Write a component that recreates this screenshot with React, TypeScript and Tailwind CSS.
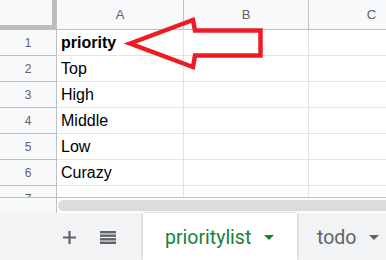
const rows = ['priority', 'Top', 'High', 'Middle', 'Low', 'Curazy', '']

function Caret({ color }: { color: string }) {
  return (
    <svg width="10" height="5" viewBox="0 0 10 5" className="shrink-0">
      <path d="M0 0 L10 0 L5 5 Z" fill={color} />
    </svg>
  )
}

export default function App() {
  return (
    <div className="relative w-[386px] h-[260px] overflow-hidden bg-white font-['Liberation_Sans',Arial,sans-serif]">
      {/* grid */}
      <div className="h-[197px] overflow-hidden">
        <div className="flex h-[30px] bg-[#f8f9fa] border-b border-[#c0c0c0] text-[13px] text-[#5f6368]">
          <div className="w-[57px] shrink-0 border-r border-[#c0c0c0]">
            <div className="w-[56px] h-[29px] border-r-4 border-b-4 border-[#bdbdbd]" />
          </div>
          <div className="w-[127px] shrink-0 flex items-center justify-center border-r border-[#c0c0c0]">A</div>
          <div className="w-[125px] shrink-0 flex items-center justify-center border-r border-[#c0c0c0]">B</div>
          <div className="w-[125px] shrink-0 flex items-center justify-center">C</div>
        </div>
        {rows.map((v, i) => (
          <div key={i} className="flex h-[26px]">
            <div className="w-[57px] shrink-0 flex items-center justify-center bg-[#f8f9fa] border-r border-b border-[#c0c0c0] text-[12px] text-[#5f6368]">
              {i + 1}
            </div>
            <div
              className={`w-[127px] shrink-0 flex items-center pl-1 border-r border-b border-[#e2e3e3] text-[16px] text-black ${
                i === 0 ? 'font-bold' : ''
              }`}
            >
              {v}
            </div>
            <div className="w-[125px] shrink-0 border-r border-b border-[#e2e3e3]" />
            <div className="w-[125px] shrink-0 border-b border-[#e2e3e3]" />
          </div>
        ))}
      </div>

      {/* horizontal scrollbar */}
      <div className="flex h-[16px] border-t border-[#c0c0c0]">
        <div className="w-[57px] shrink-0 bg-[#f8f9fa] border-r border-[#c0c0c0]" />
        <div className="flex-1 pt-[2px] pl-[1px]">
          <div className="h-[11px] rounded-l-full bg-[#dadce0]" />
        </div>
      </div>

      {/* sheet tabs */}
      <div className="flex h-[47px] bg-[#f1f3f4] font-['Roboto',Arial,sans-serif] text-[19.5px]">
        <div className="w-[143px] shrink-0 flex items-center pl-[63px] pt-[2px]">
          <svg width="13" height="13" viewBox="0 0 13 13">
            <path d="M6.5 0 V13 M0 6.5 H13" stroke="#5f6368" strokeWidth="2.2" />
          </svg>
          <svg width="16" height="13" viewBox="0 0 16 13" className="ml-[24px]">
            <g fill="#5f6368">
              <rect x="0" y="0" width="16" height="2.4" />
              <rect x="0" y="3.5" width="16" height="2.4" />
              <rect x="0" y="7.1" width="16" height="2.4" />
              <rect x="0" y="10.6" width="16" height="2.4" />
            </g>
          </svg>
        </div>
        <div className="w-[154px] shrink-0 flex items-center pl-[22px] pt-[3px] bg-white shadow-[0_0_3px_rgba(60,64,67,0.35)] z-10 text-[#188038]">
          <span>prioritylist</span>
          <span className="ml-[13px] pb-[1px]">
            <Caret color="#188038" />
          </span>
        </div>
        <div className="flex items-center pl-[20px] pt-[3px] text-[#5f6368]">
          <span>todo</span>
          <span className="ml-[13px] pb-[1px]">
            <Caret color="#5f6368" />
          </span>
        </div>
      </div>

      {/* red arrow annotation */}
      <svg className="absolute left-0 top-0 pointer-events-none" width="386" height="260">
        <polygon
          points="130,43.5 193,20 195,30.5 260.5,30.5 260.5,55.5 195,55.5 193,67"
          fill="none"
          stroke="#ed1c24"
          strokeWidth="4.5"
          strokeLinejoin="miter"
        />
      </svg>
    </div>
  )
}
